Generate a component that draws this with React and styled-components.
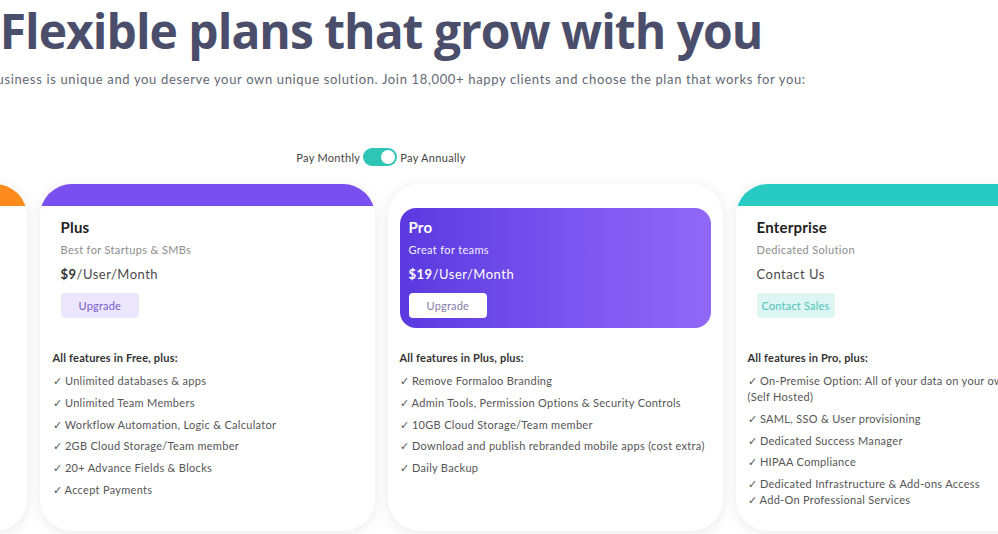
import React, { useState } from "react";
import styled, { createGlobalStyle } from "styled-components";

const Global = createGlobalStyle`
  html, body { margin: 0; padding: 0; background: #ffffff; overflow: hidden; }
  body { font-family: "Lato", "Noto Sans", sans-serif; }
  * { box-sizing: border-box; }
`;

const Page = styled.div`
  width: 762px;
  height: 534px;
  display: flex;
  flex-direction: column;
  align-items: center;
`;

const Title = styled.h1`
  margin: 3px 0 0;
  font-family: "Open Sans", "Lato", sans-serif;
  font-size: 48px;
  line-height: 56px;
  font-weight: 700;
  color: #4b4e6a;
  white-space: nowrap;
  letter-spacing: -1px;
`;

const Lead = styled.p`
  margin: 11px 0 0;
  font-size: 13px;
  line-height: 18px;
  color: #646874;
  white-space: nowrap;
  letter-spacing: 0.65px;
`;

const ToggleRow = styled.div`
  margin-top: 60px;
  display: flex;
  align-items: center;
  gap: 3px;
  font-size: 11px;
  letter-spacing: 0.3px;
  color: #444;
`;

const Switch = styled.button`
  width: 34px;
  height: 18px;
  border: none;
  border-radius: 9px;
  padding: 0 2px;
  background: #2ec4b6;
  display: flex;
  align-items: center;
  justify-content: ${(p) => (p.$on ? "flex-end" : "flex-start")};
  cursor: pointer;
  &::after {
    content: "";
    width: 14px;
    height: 14px;
    border-radius: 50%;
    background: #fff;
  }
`;

const Cards = styled.div`
  margin-top: 18px;
  display: flex;
  gap: 13px;
  flex-shrink: 0;
`;

const Card = styled.div`
  width: 335px;
  height: 347px;
  flex-shrink: 0;
  background: #fff;
  border-radius: 32px;
  overflow: hidden;
  box-shadow: 0 2px 14px rgba(0, 0, 0, 0.09);
  display: flex;
  flex-direction: column;
`;

const Band = styled.div`
  height: 22px;
  flex-shrink: 0;
  background: ${(p) => p.$color};
`;

const Body = styled.div`
  padding: 2px 12px 0;
  display: flex;
  flex-direction: column;
`;

const Head = styled.div`
  height: 120px;
  border-radius: 16px;
  padding: 10px 9px 0;
  display: flex;
  flex-direction: column;
  align-items: flex-start;
  background: ${(p) =>
    p.$highlight ? "linear-gradient(90deg, #5a39df 0%, #7b55f0 55%, #9069f8 100%)" : "transparent"};
  color: ${(p) => (p.$highlight ? "#ffffff" : "#222")};
`;

const Name = styled.div`
  font-size: 15px;
  line-height: 18px;
  font-weight: 700;
  letter-spacing: 0.2px;
  color: inherit;
`;

const Tagline = styled.div`
  margin-top: 6px;
  font-size: 11px;
  line-height: 16px;
  letter-spacing: 0.35px;
  color: ${(p) => (p.$light ? "#f3efff" : "#8d8d8d")};
`;

const Price = styled.div`
  margin-top: 7px;
  font-size: 13px;
  line-height: 18px;
  color: ${(p) => (p.$light ? "#ffffff" : "#4a4a4a")};
  letter-spacing: 0.5px;
  b { font-weight: 700; color: ${(p) => (p.$light ? "#ffffff" : "#333")}; }
`;

const Action = styled.button`
  margin-top: 10px;
  height: 25px;
  padding: 0 ${(p) => (p.$wide ? "3px" : "18px")};
  min-width: 78px;
  border: none;
  border-radius: 4px;
  font-family: inherit;
  font-size: 11px;
  letter-spacing: 0.2px;
  background: ${(p) => p.$bg};
  color: ${(p) => p.$fg};
  cursor: pointer;
`;

const FeatHead = styled.div`
  margin-top: 22px;
  font-size: 11px;
  line-height: 16px;
  font-weight: 700;
  letter-spacing: 0.2px;
  color: #333;
  padding-left: ${(p) => (p.$indent ? "1px" : "0")};
`;

const FeatList = styled.ul`
  list-style: none;
  margin: 7px 0 0;
  padding: 0 0 0 ${(p) => (p.$indent ? "1px" : "0")};
  display: flex;
  flex-direction: column;
  gap: 5.8px;
`;

const Feat = styled.li`
  font-size: 11px;
  line-height: 16px;
  letter-spacing: 0.3px;
  color: #555;
  white-space: nowrap;
`;

const plans = [
  {
    name: "Free",
    band: "#fd8a1c",
    tagline: "For individuals",
    price: "$0",
    action: "Start Free",
    btnBg: "#fff0e2",
    btnFg: "#f08a2c",
    head: "Includes:",
    features: ["Unlimited forms", "Basic Fields", "Community"],
  },
  {
    name: "Plus",
    band: "#7a4ff0",
    tagline: "Best for Startups & SMBs",
    price: "$9",
    action: "Upgrade",
    btnBg: "#ece6fd",
    btnFg: "#7a5dcb",
    head: "All features in Free, plus:",
    indent: true,
    features: [
      "Unlimited databases & apps",
      "Unlimited Team Members",
      "Workflow Automation, Logic & Calculator",
      "2GB Cloud Storage/Team member",
      "20+ Advance Fields & Blocks",
      "Accept Payments",
    ],
  },
  {
    name: "Pro",
    band: "#ffffff",
    highlight: true,
    tagline: "Great for teams",
    price: "$19",
    action: "Upgrade",
    btnBg: "#ffffff",
    btnFg: "#857ca8",
    head: "All features in Plus, plus:",
    features: [
      "Remove Formaloo Branding",
      "Admin Tools, Permission Options & Security Controls",
      "10GB Cloud Storage/Team member",
      "Download and publish rebranded mobile apps (cost extra)",
      "Daily Backup",
    ],
  },
  {
    name: "Enterprise",
    band: "#27cbc1",
    tagline: "Dedicated Solution",
    contact: "Contact Us",
    action: "Contact Sales",
    wide: true,
    btnBg: "#ddf5f3",
    btnFg: "#4fc3bb",
    head: "All features in Pro, plus:",
    features: [
      ["On-Premise Option: All of your data on your own servers", "(Self Hosted)"],
      "SAML, SSO & User provisioning",
      "Dedicated Success Manager",
      "HIPAA Compliance",
      ["Dedicated Infrastructure & Add-ons Access", "✓ Add-On Professional Services"],
    ],
  },
];

function FeatureText({ f }) {
  if (Array.isArray(f)) {
    return (
      <>
        ✓ {f[0]}
        <br />
        {f[1]}
      </>
    );
  }
  return <>✓ {f}</>;
}

export default function App() {
  const [annual, setAnnual] = useState(true);
  return (
    <>
      <Global />
      <Page>
        <Title>Flexible plans that grow with you</Title>
        <Lead>
          Your business is unique and you deserve your own unique solution. Join 18,000+ happy clients and choose the plan that works for you:
        </Lead>
        <ToggleRow>
          <span>Pay Monthly</span>
          <Switch $on={annual} onClick={() => setAnnual(!annual)} aria-label="billing period" />
          <span>Pay Annually</span>
        </ToggleRow>
        <Cards>
          {plans.map((p) => (
            <Card key={p.name}>
              <Band $color={p.band} />
              <Body>
                <Head $highlight={p.highlight}>
                  <Name>{p.name}</Name>
                  <Tagline $light={p.highlight}>{p.tagline}</Tagline>
                  <Price $light={p.highlight}>
                    {p.contact ? p.contact : (<><b>{p.price}</b>/User/Month</>)}
                  </Price>
                  <Action $bg={p.btnBg} $fg={p.btnFg} $wide={p.wide}>
                    {p.action}
                  </Action>
                </Head>
                <FeatHead $indent={p.indent}>{p.head}</FeatHead>
                <FeatList $indent={p.indent}>
                  {p.features.map((f, i) => (
                    <Feat key={i}>
                      <FeatureText f={f} />
                    </Feat>
                  ))}
                </FeatList>
              </Body>
            </Card>
          ))}
        </Cards>
      </Page>
    </>
  );
}
